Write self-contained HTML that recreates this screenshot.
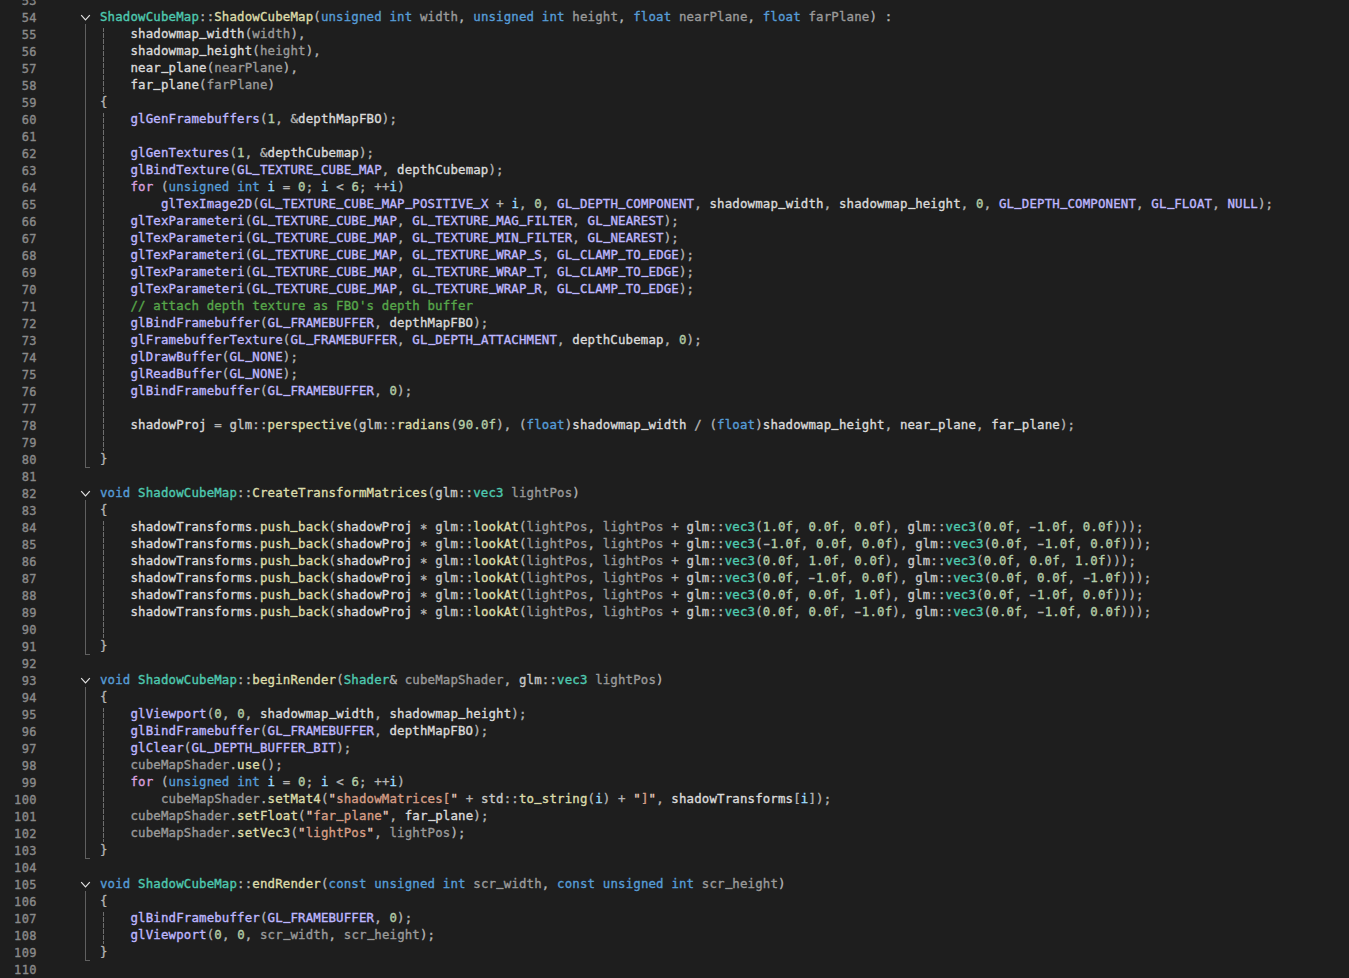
<!DOCTYPE html>
<html lang="en">
<head>
<meta charset="utf-8">
<title>ShadowCubeMap.cpp</title>
<style>
html,body{margin:0;padding:0;background:#1e1e1e;}
body{width:1349px;height:978px;overflow:hidden;position:relative;}
#ed{position:absolute;left:0;top:-9px;width:1349px;font-family:"DejaVu Sans Mono", "Liberation Mono", monospace;font-size:12.4px;line-height:17px;letter-spacing:0.156px;color:#b4b4b4;-webkit-text-stroke:0.35px;}
.r{position:relative;height:17px;}
.r i{position:absolute;left:0;top:2px;width:36.90px;text-align:right;font-style:normal;color:#8a8a8a;font-size:12px;letter-spacing:0.396px;}
.r code{white-space:pre;position:absolute;left:100px;top:0;font:inherit;letter-spacing:inherit;}
.k{color:#569cd6}.x{color:#d8a0df}.t{color:#4ec9b0}.f{color:#dcdcaa}.p{color:#9a9a9a}
.m{color:#dadada}.g{color:#c8c8c8}.l{color:#9cdcfe}.M{color:#beb7ff}.n{color:#b5cea8}
.s{color:#d69d85}.c{color:#57a64a}
.r u{text-decoration:none;display:inline-block;transform:translateY(-1.75px) scaleX(.9);-webkit-text-stroke:0.8px;}
.q{color:#e8cbbd}
.a{position:relative;top:2px}.h{display:inline-block;transform:scaleX(1.6)}
.fl{position:absolute;left:85px;width:5px;border-left:1px solid #606060;border-bottom:1px solid #606060;box-sizing:border-box;}
.gd{position:absolute;left:103px;width:1px;background:repeating-linear-gradient(to bottom,#6e6e6e 0,#6e6e6e 4px,transparent 4px,transparent 5px,#6e6e6e 5px,#6e6e6e 6px);}
.cv{position:absolute;left:80px;width:11px;height:8px;}
</style>
</head>
<body>
<div class="fl" style="top:24px;height:444px"></div>
<svg class="cv" style="top:14px" viewBox="0 0 11 8"><polyline points="1.2,1.2 5.5,5.8 9.8,1.2" fill="none" stroke="#e2e2e2" stroke-width="1.2"/></svg>
<div class="fl" style="top:500px;height:155px"></div>
<svg class="cv" style="top:490px" viewBox="0 0 11 8"><polyline points="1.2,1.2 5.5,5.8 9.8,1.2" fill="none" stroke="#e2e2e2" stroke-width="1.2"/></svg>
<div class="fl" style="top:687px;height:172px"></div>
<svg class="cv" style="top:677px" viewBox="0 0 11 8"><polyline points="1.2,1.2 5.5,5.8 9.8,1.2" fill="none" stroke="#e2e2e2" stroke-width="1.2"/></svg>
<div class="fl" style="top:891px;height:70px"></div>
<svg class="cv" style="top:881px" viewBox="0 0 11 8"><polyline points="1.2,1.2 5.5,5.8 9.8,1.2" fill="none" stroke="#e2e2e2" stroke-width="1.2"/></svg>
<div class="gd" style="top:28px;height:66px"></div>
<div class="gd" style="top:113px;height:338px"></div>
<div class="gd" style="top:521px;height:117px"></div>
<div class="gd" style="top:708px;height:134px"></div>
<div class="gd" style="top:912px;height:32px"></div>
<div id="ed">
<div class="r"><i>53</i><code></code></div>
<div class="r"><i>54</i><code><span class="t">ShadowCubeMap</span>::<span class="f">ShadowCubeMap</span>(<span class="k">unsigned</span> <span class="k">int</span> <span class="p">width</span>, <span class="k">unsigned</span> <span class="k">int</span> <span class="p">height</span>, <span class="k">float</span> <span class="p">nearPlane</span>, <span class="k">float</span> <span class="p">farPlane</span>) :</code></div>
<div class="r"><i>55</i><code>    <span class="m">shadowmap<u>_</u>width</span>(<span class="p">width</span>),</code></div>
<div class="r"><i>56</i><code>    <span class="m">shadowmap<u>_</u>height</span>(<span class="p">height</span>),</code></div>
<div class="r"><i>57</i><code>    <span class="m">near<u>_</u>plane</span>(<span class="p">nearPlane</span>),</code></div>
<div class="r"><i>58</i><code>    <span class="m">far<u>_</u>plane</span>(<span class="p">farPlane</span>)</code></div>
<div class="r"><i>59</i><code>{</code></div>
<div class="r"><i>60</i><code>    <span class="M">glGenFramebuffers</span>(<span class="n">1</span>, &amp;<span class="m">depthMapFBO</span>);</code></div>
<div class="r"><i>61</i><code></code></div>
<div class="r"><i>62</i><code>    <span class="M">glGenTextures</span>(<span class="n">1</span>, &amp;<span class="m">depthCubemap</span>);</code></div>
<div class="r"><i>63</i><code>    <span class="M">glBindTexture</span>(<span class="M">GL<u>_</u>TEXTURE<u>_</u>CUBE<u>_</u>MAP</span>, <span class="m">depthCubemap</span>);</code></div>
<div class="r"><i>64</i><code>    <span class="x">for</span> (<span class="k">unsigned</span> <span class="k">int</span> <span class="l">i</span> = <span class="n">0</span>; <span class="l">i</span> &lt; <span class="n">6</span>; ++<span class="l">i</span>)</code></div>
<div class="r"><i>65</i><code>        <span class="M">glTexImage2D</span>(<span class="M">GL<u>_</u>TEXTURE<u>_</u>CUBE<u>_</u>MAP<u>_</u>POSITIVE<u>_</u>X</span> + <span class="l">i</span>, <span class="n">0</span>, <span class="M">GL<u>_</u>DEPTH<u>_</u>COMPONENT</span>, <span class="m">shadowmap<u>_</u>width</span>, <span class="m">shadowmap<u>_</u>height</span>, <span class="n">0</span>, <span class="M">GL<u>_</u>DEPTH<u>_</u>COMPONENT</span>, <span class="M">GL<u>_</u>FLOAT</span>, <span class="M">NULL</span>);</code></div>
<div class="r"><i>66</i><code>    <span class="M">glTexParameteri</span>(<span class="M">GL<u>_</u>TEXTURE<u>_</u>CUBE<u>_</u>MAP</span>, <span class="M">GL<u>_</u>TEXTURE<u>_</u>MAG<u>_</u>FILTER</span>, <span class="M">GL<u>_</u>NEAREST</span>);</code></div>
<div class="r"><i>67</i><code>    <span class="M">glTexParameteri</span>(<span class="M">GL<u>_</u>TEXTURE<u>_</u>CUBE<u>_</u>MAP</span>, <span class="M">GL<u>_</u>TEXTURE<u>_</u>MIN<u>_</u>FILTER</span>, <span class="M">GL<u>_</u>NEAREST</span>);</code></div>
<div class="r"><i>68</i><code>    <span class="M">glTexParameteri</span>(<span class="M">GL<u>_</u>TEXTURE<u>_</u>CUBE<u>_</u>MAP</span>, <span class="M">GL<u>_</u>TEXTURE<u>_</u>WRAP<u>_</u>S</span>, <span class="M">GL<u>_</u>CLAMP<u>_</u>TO<u>_</u>EDGE</span>);</code></div>
<div class="r"><i>69</i><code>    <span class="M">glTexParameteri</span>(<span class="M">GL<u>_</u>TEXTURE<u>_</u>CUBE<u>_</u>MAP</span>, <span class="M">GL<u>_</u>TEXTURE<u>_</u>WRAP<u>_</u>T</span>, <span class="M">GL<u>_</u>CLAMP<u>_</u>TO<u>_</u>EDGE</span>);</code></div>
<div class="r"><i>70</i><code>    <span class="M">glTexParameteri</span>(<span class="M">GL<u>_</u>TEXTURE<u>_</u>CUBE<u>_</u>MAP</span>, <span class="M">GL<u>_</u>TEXTURE<u>_</u>WRAP<u>_</u>R</span>, <span class="M">GL<u>_</u>CLAMP<u>_</u>TO<u>_</u>EDGE</span>);</code></div>
<div class="r"><i>71</i><code>    <span class="c">// attach depth texture as FBO's depth buffer</span></code></div>
<div class="r"><i>72</i><code>    <span class="M">glBindFramebuffer</span>(<span class="M">GL<u>_</u>FRAMEBUFFER</span>, <span class="m">depthMapFBO</span>);</code></div>
<div class="r"><i>73</i><code>    <span class="M">glFramebufferTexture</span>(<span class="M">GL<u>_</u>FRAMEBUFFER</span>, <span class="M">GL<u>_</u>DEPTH<u>_</u>ATTACHMENT</span>, <span class="m">depthCubemap</span>, <span class="n">0</span>);</code></div>
<div class="r"><i>74</i><code>    <span class="M">glDrawBuffer</span>(<span class="M">GL<u>_</u>NONE</span>);</code></div>
<div class="r"><i>75</i><code>    <span class="M">glReadBuffer</span>(<span class="M">GL<u>_</u>NONE</span>);</code></div>
<div class="r"><i>76</i><code>    <span class="M">glBindFramebuffer</span>(<span class="M">GL<u>_</u>FRAMEBUFFER</span>, <span class="n">0</span>);</code></div>
<div class="r"><i>77</i><code></code></div>
<div class="r"><i>78</i><code>    <span class="m">shadowProj</span> = <span class="g">glm</span>::<span class="f">perspective</span>(<span class="g">glm</span>::<span class="f">radians</span>(<span class="n">90.0f</span>), (<span class="k">float</span>)<span class="m">shadowmap<u>_</u>width</span> / (<span class="k">float</span>)<span class="m">shadowmap<u>_</u>height</span>, <span class="m">near<u>_</u>plane</span>, <span class="m">far<u>_</u>plane</span>);</code></div>
<div class="r"><i>79</i><code></code></div>
<div class="r"><i>80</i><code>}</code></div>
<div class="r"><i>81</i><code></code></div>
<div class="r"><i>82</i><code><span class="k">void</span> <span class="t">ShadowCubeMap</span>::<span class="f">CreateTransformMatrices</span>(<span class="g">glm</span>::<span class="t">vec3</span> <span class="p">lightPos</span>)</code></div>
<div class="r"><i>83</i><code>{</code></div>
<div class="r"><i>84</i><code>    <span class="m">shadowTransforms</span>.<span class="f">push<u>_</u>back</span>(<span class="m">shadowProj</span> <span class="a">*</span> <span class="g">glm</span>::<span class="f">lookAt</span>(<span class="p">lightPos</span>, <span class="p">lightPos</span> + <span class="g">glm</span>::<span class="t">vec3</span>(<span class="n">1.0f</span>, <span class="n">0.0f</span>, <span class="n">0.0f</span>), <span class="g">glm</span>::<span class="t">vec3</span>(<span class="n">0.0f</span>, <span class="h">-</span><span class="n">1.0f</span>, <span class="n">0.0f</span>)));</code></div>
<div class="r"><i>85</i><code>    <span class="m">shadowTransforms</span>.<span class="f">push<u>_</u>back</span>(<span class="m">shadowProj</span> <span class="a">*</span> <span class="g">glm</span>::<span class="f">lookAt</span>(<span class="p">lightPos</span>, <span class="p">lightPos</span> + <span class="g">glm</span>::<span class="t">vec3</span>(<span class="h">-</span><span class="n">1.0f</span>, <span class="n">0.0f</span>, <span class="n">0.0f</span>), <span class="g">glm</span>::<span class="t">vec3</span>(<span class="n">0.0f</span>, <span class="h">-</span><span class="n">1.0f</span>, <span class="n">0.0f</span>)));</code></div>
<div class="r"><i>86</i><code>    <span class="m">shadowTransforms</span>.<span class="f">push<u>_</u>back</span>(<span class="m">shadowProj</span> <span class="a">*</span> <span class="g">glm</span>::<span class="f">lookAt</span>(<span class="p">lightPos</span>, <span class="p">lightPos</span> + <span class="g">glm</span>::<span class="t">vec3</span>(<span class="n">0.0f</span>, <span class="n">1.0f</span>, <span class="n">0.0f</span>), <span class="g">glm</span>::<span class="t">vec3</span>(<span class="n">0.0f</span>, <span class="n">0.0f</span>, <span class="n">1.0f</span>)));</code></div>
<div class="r"><i>87</i><code>    <span class="m">shadowTransforms</span>.<span class="f">push<u>_</u>back</span>(<span class="m">shadowProj</span> <span class="a">*</span> <span class="g">glm</span>::<span class="f">lookAt</span>(<span class="p">lightPos</span>, <span class="p">lightPos</span> + <span class="g">glm</span>::<span class="t">vec3</span>(<span class="n">0.0f</span>, <span class="h">-</span><span class="n">1.0f</span>, <span class="n">0.0f</span>), <span class="g">glm</span>::<span class="t">vec3</span>(<span class="n">0.0f</span>, <span class="n">0.0f</span>, <span class="h">-</span><span class="n">1.0f</span>)));</code></div>
<div class="r"><i>88</i><code>    <span class="m">shadowTransforms</span>.<span class="f">push<u>_</u>back</span>(<span class="m">shadowProj</span> <span class="a">*</span> <span class="g">glm</span>::<span class="f">lookAt</span>(<span class="p">lightPos</span>, <span class="p">lightPos</span> + <span class="g">glm</span>::<span class="t">vec3</span>(<span class="n">0.0f</span>, <span class="n">0.0f</span>, <span class="n">1.0f</span>), <span class="g">glm</span>::<span class="t">vec3</span>(<span class="n">0.0f</span>, <span class="h">-</span><span class="n">1.0f</span>, <span class="n">0.0f</span>)));</code></div>
<div class="r"><i>89</i><code>    <span class="m">shadowTransforms</span>.<span class="f">push<u>_</u>back</span>(<span class="m">shadowProj</span> <span class="a">*</span> <span class="g">glm</span>::<span class="f">lookAt</span>(<span class="p">lightPos</span>, <span class="p">lightPos</span> + <span class="g">glm</span>::<span class="t">vec3</span>(<span class="n">0.0f</span>, <span class="n">0.0f</span>, <span class="h">-</span><span class="n">1.0f</span>), <span class="g">glm</span>::<span class="t">vec3</span>(<span class="n">0.0f</span>, <span class="h">-</span><span class="n">1.0f</span>, <span class="n">0.0f</span>)));</code></div>
<div class="r"><i>90</i><code></code></div>
<div class="r"><i>91</i><code>}</code></div>
<div class="r"><i>92</i><code></code></div>
<div class="r"><i>93</i><code><span class="k">void</span> <span class="t">ShadowCubeMap</span>::<span class="f">beginRender</span>(<span class="t">Shader</span>&amp; <span class="p">cubeMapShader</span>, <span class="g">glm</span>::<span class="t">vec3</span> <span class="p">lightPos</span>)</code></div>
<div class="r"><i>94</i><code>{</code></div>
<div class="r"><i>95</i><code>    <span class="M">glViewport</span>(<span class="n">0</span>, <span class="n">0</span>, <span class="m">shadowmap<u>_</u>width</span>, <span class="m">shadowmap<u>_</u>height</span>);</code></div>
<div class="r"><i>96</i><code>    <span class="M">glBindFramebuffer</span>(<span class="M">GL<u>_</u>FRAMEBUFFER</span>, <span class="m">depthMapFBO</span>);</code></div>
<div class="r"><i>97</i><code>    <span class="M">glClear</span>(<span class="M">GL<u>_</u>DEPTH<u>_</u>BUFFER<u>_</u>BIT</span>);</code></div>
<div class="r"><i>98</i><code>    <span class="p">cubeMapShader</span>.<span class="f">use</span>();</code></div>
<div class="r"><i>99</i><code>    <span class="x">for</span> (<span class="k">unsigned</span> <span class="k">int</span> <span class="l">i</span> = <span class="n">0</span>; <span class="l">i</span> &lt; <span class="n">6</span>; ++<span class="l">i</span>)</code></div>
<div class="r"><i>100</i><code>        <span class="p">cubeMapShader</span>.<span class="f">setMat4</span>(<span class="s"><span class="q">"</span>shadowMatrices[<span class="q">"</span></span> + <span class="g">std</span>::<span class="f">to<u>_</u>string</span>(<span class="l">i</span>) + <span class="s"><span class="q">"</span>]<span class="q">"</span></span>, <span class="m">shadowTransforms</span>[<span class="l">i</span>]);</code></div>
<div class="r"><i>101</i><code>    <span class="p">cubeMapShader</span>.<span class="f">setFloat</span>(<span class="s"><span class="q">"</span>far<u>_</u>plane<span class="q">"</span></span>, <span class="m">far<u>_</u>plane</span>);</code></div>
<div class="r"><i>102</i><code>    <span class="p">cubeMapShader</span>.<span class="f">setVec3</span>(<span class="s"><span class="q">"</span>lightPos<span class="q">"</span></span>, <span class="p">lightPos</span>);</code></div>
<div class="r"><i>103</i><code>}</code></div>
<div class="r"><i>104</i><code></code></div>
<div class="r"><i>105</i><code><span class="k">void</span> <span class="t">ShadowCubeMap</span>::<span class="f">endRender</span>(<span class="k">const</span> <span class="k">unsigned</span> <span class="k">int</span> <span class="p">scr<u>_</u>width</span>, <span class="k">const</span> <span class="k">unsigned</span> <span class="k">int</span> <span class="p">scr<u>_</u>height</span>)</code></div>
<div class="r"><i>106</i><code>{</code></div>
<div class="r"><i>107</i><code>    <span class="M">glBindFramebuffer</span>(<span class="M">GL<u>_</u>FRAMEBUFFER</span>, <span class="n">0</span>);</code></div>
<div class="r"><i>108</i><code>    <span class="M">glViewport</span>(<span class="n">0</span>, <span class="n">0</span>, <span class="p">scr<u>_</u>width</span>, <span class="p">scr<u>_</u>height</span>);</code></div>
<div class="r"><i>109</i><code>}</code></div>
<div class="r"><i>110</i><code></code></div>
</div>
</body>
</html>
